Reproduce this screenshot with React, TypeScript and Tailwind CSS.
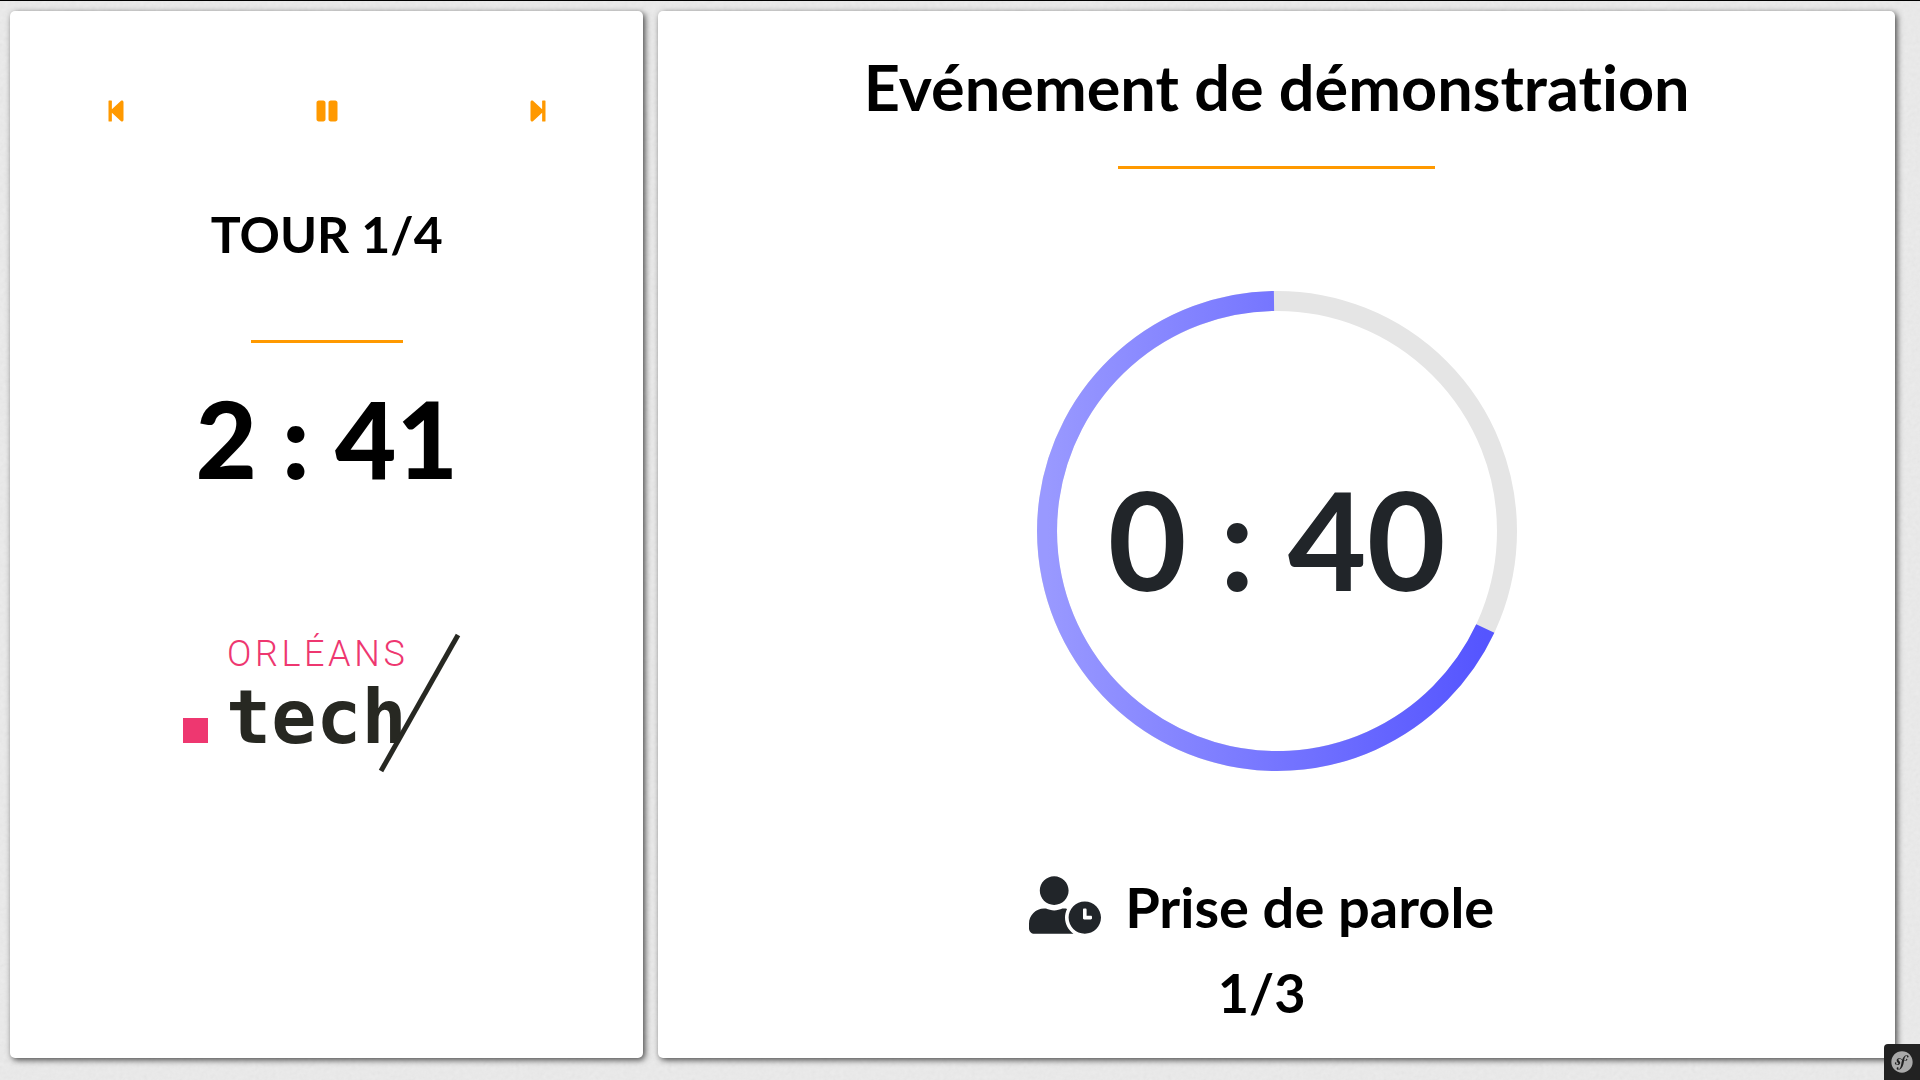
import React from "react";
import { FaPause, FaStepBackward, FaStepForward, FaSymfony, FaUserClock } from "react-icons/fa";

function PaperTexture() {
  return (
    <svg className="pointer-events-none absolute inset-0 h-full w-full" aria-hidden="true">
      <filter id="paper">
        <feTurbulence type="fractalNoise" baseFrequency="0.25" numOctaves="3" stitchTiles="stitch" />
        <feColorMatrix values="0.33 0.33 0.33 0 0  0.33 0.33 0.33 0 0  0.33 0.33 0.33 0 0  0 0 0 0 1" />
      </filter>
      <rect width="100%" height="100%" filter="url(#paper)" opacity="0.08" />
    </svg>
  );
}

function Divider({ className }: { className: string }) {
  return <hr className={`h-[3px] border-0 bg-[#ff9900] ${className}`} />;
}

function Controls() {
  const button = "flex h-8 w-8 cursor-pointer items-center justify-center text-2xl text-[#ff9900]";
  return (
    <div className="grid w-full grid-cols-3 justify-items-center">
      <button type="button" aria-label="Tour précédent" className={button}>
        <FaStepBackward />
      </button>
      <button type="button" aria-label="Pause" className={button}>
        <FaPause />
      </button>
      <button type="button" aria-label="Tour suivant" className={button}>
        <FaStepForward />
      </button>
    </div>
  );
}

function Logo() {
  return (
    <svg viewBox="0 0 280 140" className="h-[140px] w-[280px]" role="img" aria-label="Orléans Tech">
      <rect x="0" y="85" width="25" height="25" fill="#ee3770" />
      <text x="44" y="33" fontSize="36" fontWeight="300" fill="#ee3770" className="font-['Roboto',sans-serif] tracking-widest">
        ORLÉANS
      </text>
      <text x="43" y="110" fontSize="75" fontWeight="700" fill="#272822" className="font-['DejaVu_Sans_Mono',monospace]">
        tech
      </text>
      <path d="M214 112L228 88V112Z" fill="#fff" />
      <path d="M275 2L198 138" stroke="#272822" strokeWidth="5" fill="none" />
    </svg>
  );
}

function Countdown() {
  return (
    <div className="relative h-[480px] w-[480px]">
      <svg viewBox="0 0 480 480" className="h-full w-full" aria-hidden="true">
        <defs>
          <linearGradient id="ring" x1="0" y1="0" x2="1" y2="0">
            <stop offset="0" stopColor="#9999ff" />
            <stop offset="1" stopColor="#5555ff" />
          </linearGradient>
        </defs>
        <circle cx="240" cy="240" r="230" fill="none" stroke="#e5e5e5" strokeWidth="20" />
        <path d="M448.3 337.6A230 230 0 1 1 237 10" fill="none" stroke="url(#ring)" strokeWidth="20" />
      </svg>
      <div className="absolute inset-0 flex items-center justify-center pt-4 text-[136px] leading-none font-bold whitespace-nowrap text-[#212529]">
        0 : 40
      </div>
    </div>
  );
}

export default function App() {
  const card = "relative flex flex-col items-center rounded-[5px] bg-white shadow-[2px_2px_6px_rgba(0,0,0,0.7)]";
  return (
    <div className="relative flex min-h-screen gap-[15px] border-t border-black bg-[#ededed] pt-[10px] pr-[25px] pb-[22px] pl-[10px] font-['Lato',sans-serif] text-black [font-variant-ligatures:none]">
      <PaperTexture />
      <aside className={`${card} w-[33.6%] pt-[84px]`}>
        <Controls />
        <h2 className="mt-[75px] text-[50px] leading-16 font-bold">TOUR 1/4</h2>
        <Divider className="mt-[74px] w-[24%]" />
        <p className="mt-[42px] text-[106px] leading-[106px] font-black">2 : 41</p>
        <div className="mt-[142px] pr-2">
          <Logo />
        </div>
      </aside>
      <main className={`${card} flex-1 pt-9`}>
        <h1 className="text-[63px] leading-20 font-bold">Evénement de démonstration</h1>
        <Divider className="mt-[39px] w-[317px]" />
        <div className="mt-[122px]">
          <Countdown />
        </div>
        <div className="mt-[96px] flex flex-col items-center pr-[30px]">
          <div className="flex items-center gap-6">
            <FaUserClock className="mb-1 h-[58px] w-[72px] text-[#212529]" />
            <h3 className="text-[56px] leading-20 font-bold">Prise de parole</h3>
          </div>
          <p className="mt-1 text-[54px] leading-[84px] font-bold">1/3</p>
        </div>
      </main>
      <button
        type="button"
        aria-label="Symfony"
        className="absolute right-0 bottom-0 flex h-9 w-9 cursor-pointer items-center justify-center rounded-tl bg-[#222] text-[22px] text-[#aaa]"
      >
        <FaSymfony />
      </button>
    </div>
  );
}
